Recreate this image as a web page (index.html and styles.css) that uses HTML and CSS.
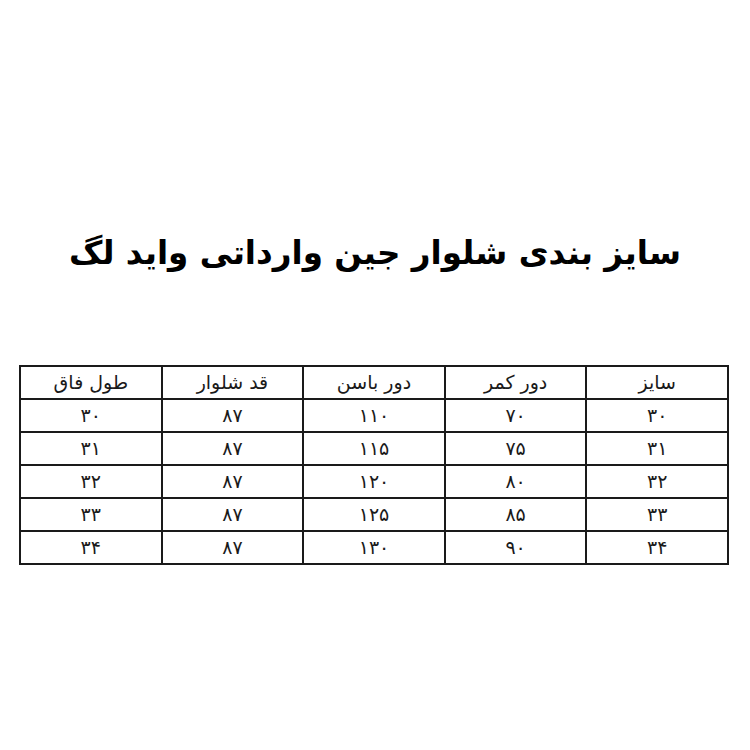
FILE: index.html
```html
<!DOCTYPE html>
<html lang="fa" dir="rtl">
<head>
<meta charset="utf-8">
<link rel="stylesheet" href="styles.css">
</head>
<body>
<main class="page">
  <h1 class="title">سایز بندی شلوار جین وارداتی واید لگ</h1>
  <table class="sizes">
    <thead>
      <tr><th>سایز</th><th>دور کمر</th><th>دور باسن</th><th>قد شلوار</th><th>طول فاق</th></tr>
    </thead>
    <tbody>
      <tr><td>۳۰</td><td>۷۰</td><td>۱۱۰</td><td>۸۷</td><td>۳۰</td></tr>
      <tr><td>۳۱</td><td>۷۵</td><td>۱۱۵</td><td>۸۷</td><td>۳۱</td></tr>
      <tr><td>۳۲</td><td>۸۰</td><td>۱۲۰</td><td>۸۷</td><td>۳۲</td></tr>
      <tr><td>۳۳</td><td>۸۵</td><td>۱۲۵</td><td>۸۷</td><td>۳۳</td></tr>
      <tr><td>۳۴</td><td>۹۰</td><td>۱۳۰</td><td>۸۷</td><td>۳۴</td></tr>
    </tbody>
  </table>
</main>
</body>
</html>
```
FILE: styles.css
```css
html, body {
  margin: 0;
  padding: 0;
  background: #ffffff;
}
.page {
  width: 750px;
  height: 750px;
  display: flex;
  flex-direction: column;
  align-items: center;
  font-family: "DejaVu Sans", "Noto Sans", sans-serif;
  color: #111;
}
.title {
  margin: 227px 0 0 0;
  font-size: 32.6px;
  line-height: 52px;
  font-weight: bold;
  color: #000;
}
.sizes {
  margin-top: 86px;
  margin-right: 2px;
  border-collapse: collapse;
  border: 2px solid #1a1a1a;
  table-layout: fixed;
  width: 710px;
}
.sizes th, .sizes td {
  border: 2px solid #1a1a1a;
  height: 31px;
  padding: 0;
  text-align: center;
  font-size: 19px;
  font-weight: normal;
  line-height: 31px;
  color: #1a1a1a;
}
```
